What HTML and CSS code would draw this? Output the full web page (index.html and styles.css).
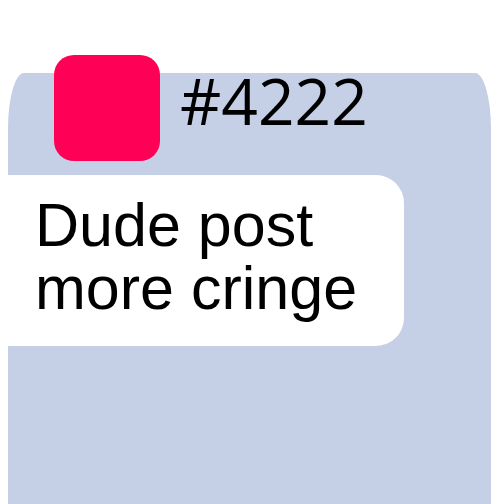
FILE: index.html
```html
<!DOCTYPE html>
<html>
<head>
<meta charset="utf-8">
<link rel="stylesheet" href="styles.css">
</head>
<body>
<div class="card">
  <div class="header">
    <div class="avatar"></div>
    <div class="post-id">#4222</div>
  </div>
  <div class="bubble">Dude post more cringe</div>
</div>
</body>
</html>
```
FILE: styles.css
```css
html, body {
  background: #ffffff;
}
body {
  margin: 0;
  padding: 73px 8px 0 8px;
  font-family: "Liberation Sans", Arial, sans-serif;
  overflow: hidden;
  height: 431px;
}
.card {
  display: flow-root;
  width: 483px;
  height: 431px;
  background: #c5cfe6;
  border-radius: 16px 16px 0 0 / 56px 56px 0 0;
}
.header {
  display: flex;
  align-items: flex-start;
  margin-top: -18px;
  padding-left: 46px;
  gap: 20px;
  height: 106px;
}
.avatar {
  width: 106px;
  height: 106px;
  border-radius: 20px;
  background: #ff0057;
  flex: none;
}
.post-id {
  font-family: "Open Sans", sans-serif;
  font-weight: 400;
  font-size: 64px;
  line-height: 1;
  color: #000;
  margin-top: 14px;
}
.bubble {
  margin-top: 14px;
  width: 369px;
  background: #ffffff;
  border-radius: 0 28px 28px 0;
  padding: 19px 0 26px 27px;
  font-size: 61px;
  line-height: 63px;
  color: #000;
}
```
